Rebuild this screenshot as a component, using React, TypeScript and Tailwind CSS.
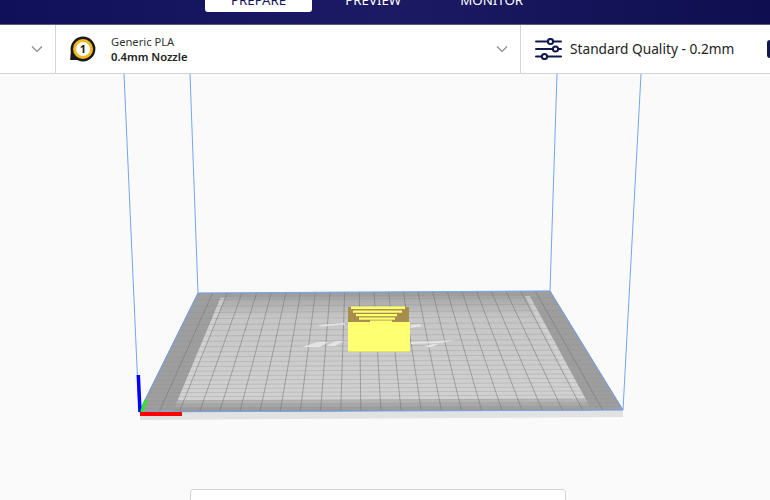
const corners = { bl: [139, 412], br: [623, 410], tl: [198, 293], tr: [550, 291] };
const ratio = 352 / 484;

// world u (left to right), v (0 back, 1 front) to screen, with perspective
const project = (u: number, v: number) => {
  const w = 1 - v;
  const f = (w * ratio) / (w * ratio + (1 - w));
  const lx = corners.bl[0] + (corners.tl[0] - corners.bl[0]) * f;
  const ly = corners.bl[1] + (corners.tl[1] - corners.bl[1]) * f;
  const rx = corners.br[0] + (corners.tr[0] - corners.br[0]) * f;
  const ry = corners.br[1] + (corners.tr[1] - corners.br[1]) * f;
  return [lx + (rx - lx) * u, ly + (ry - ly) * u];
};

const quad = (u0: number, v0: number, u1: number, v1: number) =>
  [project(u0, v0), project(u1, v0), project(u1, v1), project(u0, v1)]
    .map((p) => p.join(","))
    .join(" ");

const COLS = 24;
const ROWS = 24;
const cols = Array.from({ length: COLS + 1 }, (_, i) => i / COLS);
const rows = Array.from({ length: ROWS + 1 }, (_, i) => i / ROWS);

const logoBits = [
  "302,347 318,342 328,342 320,347",
  "326,346 336,341 344,341 335,346",
  "318,325 345,323 345,324.500 322,326.500",
  "411,325 420,324 422,326 411,328",
  "411,342 438,341 456,340 440,343 411,344",
  "424,346 434,344 438,344.500 430,347.500",
];

const Scene = () => (
  <svg className="absolute left-0 top-[-74px]" width="770" height="500" viewBox="0 0 770 500">
    <defs>
      <linearGradient id="inner" x1="0" y1="0" x2="0" y2="1">
        <stop offset="0" stopColor="#a6a6a6" />
        <stop offset="0.2" stopColor="#c6c6c6" />
        <stop offset="1" stopColor="#d2d2d2" />
      </linearGradient>
      <linearGradient id="front" x1="0" y1="0" x2="0" y2="1">
        <stop offset="0" stopColor="#bcbcbc" />
        <stop offset="1" stopColor="#949494" />
      </linearGradient>
    </defs>
    <polygon points="140,413 623,410 623,417 140,420" fill="#e2e2e2" />
    <g className="blur-[0.5px]">
      <polygon points={quad(0, 0, 1, 1)} fill="#9e9e9e" />
      <polygon points={quad(0.07, 0.03, 0.935, 0.9)} fill="url(#inner)" />
      <polygon points={quad(0.07, 0.87, 0.935, 1)} fill="url(#front)" />
      <polygon points={quad(0.07, 0.03, 0.082, 0.87)} fill="#d4d4d4" opacity="0.7" />
      <polygon points={quad(0.922, 0.03, 0.935, 0.87)} fill="#d4d4d4" opacity="0.7" />
      {rows.map((v) => {
        const [a, b] = [project(0, v), project(1, v)];
        return <line key={v} x1={a[0]} y1={a[1]} x2={b[0]} y2={b[1]} stroke="#8c8c8c" strokeWidth="1" opacity="0.3" />;
      })}
      {cols.map((u) => {
        const [a, b] = [project(u, 0), project(u, 1)];
        return <line key={u} x1={a[0]} y1={a[1]} x2={b[0]} y2={b[1]} stroke="#6f6f6f" strokeWidth="1" opacity="0.5" />;
      })}
      {logoBits.map((p) => (
        <polygon key={p} points={p} fill="#e4e4e4" />
      ))}
    </g>

    <g className="blur-[0.3px]">
      <rect x="348" y="307" width="61" height="15" fill="#a68f4d" />
      <rect x="351" y="306.500" width="54" height="2.500" fill="#ffff70" />
      <rect x="353" y="310.500" width="49" height="2.200" fill="#ffff70" />
      <rect x="356" y="314" width="41" height="2.200" fill="#ffff70" />
      <rect x="359" y="317.500" width="36" height="2.200" fill="#ffff70" />
      <rect x="370" y="320.500" width="22" height="1.500" fill="#ffff70" />
      <rect x="348" y="322" width="62" height="30" fill="#ffff72" />
      <rect x="348" y="351" width="62" height="1" fill="#e4e060" />
    </g>

    <g fill="none" stroke="#74a4f2" strokeWidth="1">
      <line x1="124" y1="74" x2="139" y2="412" />
      <line x1="190" y1="74" x2="198" y2="293" />
      <line x1="557" y1="74" x2="550" y2="291" />
      <line x1="641" y1="74" x2="623" y2="410" />
      <polygon points="139,412 623,410 550,291 198,293" />
    </g>

    <line x1="138.300" y1="375" x2="140" y2="412" stroke="#0000ff" strokeWidth="3.500" />
    <line x1="141.500" y1="412" x2="146" y2="400" stroke="#22ee22" strokeWidth="3" />
    <line x1="140" y1="414" x2="182" y2="414" stroke="#ff0000" strokeWidth="4" />
  </svg>
);

const Chevron = () => (
  <svg width="12" height="8" viewBox="0 0 12 8" fill="none" stroke="#8a8a8a" strokeWidth="1.2">
    <path d="M1 1.5 6 6.5 11 1.5" />
  </svg>
);

const NozzleIcon = () => (
  <svg className="shrink-0" width="28" height="28" viewBox="0 0 28 28">
    <path d="M1.200 25 2 13 14 25Z" fill="#1a1a1a" />
    <circle cx="14" cy="14" r="11.200" fill="#f5b81f" stroke="#1a1a1a" strokeWidth="2.400" />
    <circle cx="14" cy="14" r="7" fill="#fff" />
    <text x="14" y="18" textAnchor="middle" fontSize="11" fontWeight="700" fill="#1a1a1a" fontFamily="'Noto Sans', sans-serif">
      1
    </text>
  </svg>
);

const SlidersIcon = () => (
  <svg className="shrink-0" width="27" height="22" viewBox="0 0 27 22" fill="none" stroke="#10184a" strokeWidth="2">
    <path d="M1 3.500h11.500M18.500 3.500h7.500M1 11h16.500M23.500 11h2.500M1 18.500h5.500M12.500 18.500h13.500" strokeLinecap="round" />
    <circle cx="15.500" cy="3.500" r="2.600" />
    <circle cx="20.500" cy="11" r="2.600" />
    <circle cx="9.500" cy="18.500" r="2.600" />
  </svg>
);

const tabs = ["PREPARE", "PREVIEW", "MONITOR"];

export default function App() {
  return (
    <div className="flex h-[500px] w-[770px] flex-col overflow-hidden bg-[#fafafa] font-['Noto_Sans',sans-serif] text-[#222]">
      <header className="h-[25px] shrink-0 overflow-hidden border-b border-b-[#5a5a86] bg-gradient-to-r from-[#10105a] via-[#1c1a64] to-[#0e0e50]">
        <nav className="-mt-[11px] flex gap-[7px] pl-[205px]">
          {tabs.map((tab, i) => (
            <div
              key={tab}
              className={`flex h-[23px] items-center rounded-[3px] px-[26px] text-[13.3px] ${
                i === 0 ? "bg-white text-[#12125a]" : "text-white"
              }`}
            >
              {tab}
            </div>
          ))}
        </nav>
      </header>

      <div className="flex h-[49px] shrink-0 items-stretch border-b border-b-[#d4d4d4] bg-white">
        <div className="flex w-[56px] shrink-0 items-center justify-end border-r border-r-[#d4d4d4] pr-[12px]">
          <Chevron />
        </div>
        <div className="flex w-[465px] shrink-0 items-center border-r border-r-[#d4d4d4] pl-[13px] pr-[12px]">
          <NozzleIcon />
          <div className="ml-[14px] flex-1 text-[11.2px] leading-[15px]">
            <div className="text-[#333]">Generic PLA</div>
            <div className="font-semibold text-[#222]">0.4mm Nozzle</div>
          </div>
          <Chevron />
        </div>
        <div className="flex flex-1 items-center overflow-hidden pl-[14px]">
          <SlidersIcon />
          <span className="ml-[8px] whitespace-nowrap pt-px text-[13.7px] text-[#222]">Standard Quality - 0.2mm</span>
          <div className="ml-[33px] h-[18px] w-[6px] shrink-0 rounded-l-[3px] bg-[#10184a]" />
        </div>
      </div>

      <main className="relative flex-1 overflow-hidden">
        <Scene />
        <div className="absolute left-[190px] top-[415px] h-[40px] w-[376px] rounded-[3px] border border-[#d4d4d4] bg-white" />
      </main>
    </div>
  );
}
